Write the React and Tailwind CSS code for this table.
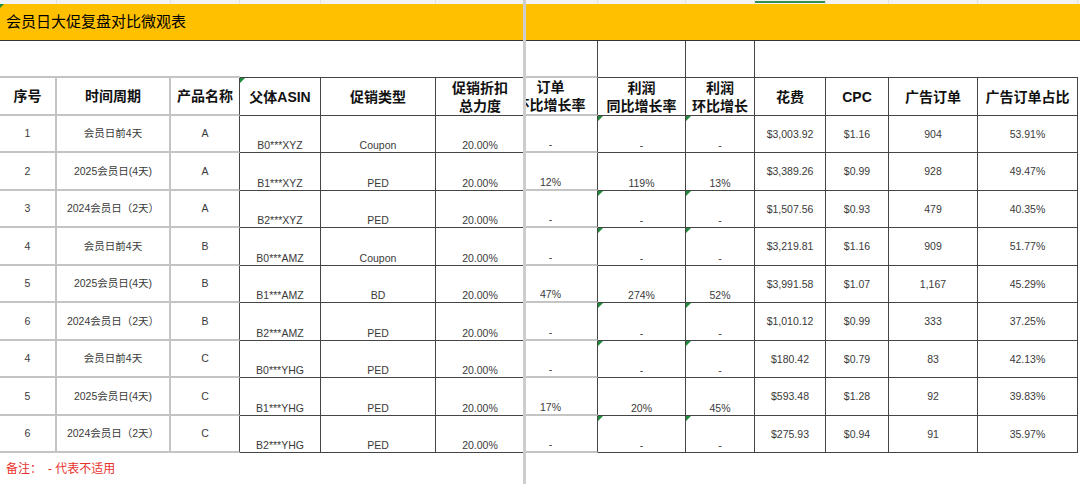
import React from "react";

const GRID =
  "grid grid-cols-[57px_114px_69px_81px_115px_88px_74px_88px_69px_71px_63px_89px_100px]";

const GRAY_R = "border-r-2 border-r-[#c4c4c4]";
const DARK_R = "border-r border-r-[#454545]";
const GRAY_B = "border-b-2 border-b-[#c4c4c4]";
const DARK_B = "border-b border-b-[#454545]";

const rightBorder = [GRAY_R, GRAY_R, DARK_R, DARK_R, DARK_R, "", DARK_R, DARK_R, DARK_R, DARK_R, DARK_R, DARK_R, DARK_R];
const bottomBorder = [GRAY_B, GRAY_B, GRAY_B, DARK_B, DARK_B, DARK_B, GRAY_B, DARK_B, DARK_B, DARK_B, DARK_B, DARK_B, DARK_B];
const align = [
  "items-center",
  "items-center",
  "items-center",
  "items-end",
  "items-end",
  "items-end",
  "items-end",
  "items-end",
  "items-end",
  "items-center",
  "items-center",
  "items-center",
  "items-center",
];

const headers = [
  ["序号"],
  ["时间周期"],
  ["产品名称"],
  ["父体ASIN"],
  ["促销类型"],
  ["促销折扣", "总力度"],
  ["订单", "环比增长率"],
  ["利润", "同比增长率"],
  ["利润", "环比增长"],
  ["花费"],
  ["CPC"],
  ["广告订单"],
  ["广告订单占比"],
];

const rows = [
  ["1", "会员日前4天", "A", "B0***XYZ", "Coupon", "20.00%", "-", "-", "-", "$3,003.92", "$1.16", "904", "53.91%"],
  ["2", "2025会员日(4天)", "A", "B1***XYZ", "PED", "20.00%", "12%", "119%", "13%", "$3,389.26", "$0.99", "928", "49.47%"],
  ["3", "2024会员日（2天）", "A", "B2***XYZ", "PED", "20.00%", "-", "-", "-", "$1,507.56", "$0.93", "479", "40.35%"],
  ["4", "会员日前4天", "B", "B0***AMZ", "Coupon", "20.00%", "-", "-", "-", "$3,219.81", "$1.16", "909", "51.77%"],
  ["5", "2025会员日(4天)", "B", "B1***AMZ", "BD", "20.00%", "47%", "274%", "52%", "$3,991.58", "$1.07", "1,167", "45.29%"],
  ["6", "2024会员日（2天）", "B", "B2***AMZ", "PED", "20.00%", "-", "-", "-", "$1,010.12", "$0.99", "333", "37.25%"],
  ["4", "会员日前4天", "C", "B0***YHG", "PED", "20.00%", "-", "-", "-", "$180.42", "$0.79", "83", "42.13%"],
  ["5", "2025会员日(4天)", "C", "B1***YHG", "PED", "20.00%", "17%", "20%", "45%", "$593.48", "$1.28", "92", "39.83%"],
  ["6", "2024会员日（2天）", "C", "B2***YHG", "PED", "20.00%", "-", "-", "-", "$275.93", "$0.94", "91", "35.97%"],
];

// little green "number stored as text" flag in a cell corner
const Flag = () => (
  <span className="absolute left-0 top-0 h-0 w-0 border-r-[5px] border-t-[5px] border-r-transparent border-t-[#1f8a3b]" />
);

// the 订单 column is partly scrolled under the frozen pane
const Shifted = ({ children }) => (
  <div className="-ml-[20px] w-[96px] shrink-0 text-center">{children}</div>
);

const HeaderRow = () => (
  <div className={`${GRID} h-[38px]`}>
    {headers.map((lines, i) => (
      <div
        key={i}
        className={`relative flex items-center justify-center overflow-hidden ${rightBorder[i]} ${bottomBorder[i]}`}
      >
        {i === 3 && <Flag />}
        {i === 6 ? (
          <Shifted>
            {lines.map((l) => (
              <div key={l} className="whitespace-nowrap">{l}</div>
            ))}
          </Shifted>
        ) : (
          <div className="text-center">
            {lines.map((l) => (
              <div key={l} className="whitespace-nowrap">{l}</div>
            ))}
          </div>
        )}
      </div>
    ))}
  </div>
);

const DataRow = ({ row, index }) => {
  const flagged = row[6] === "-";
  return (
    <div className={`${GRID} ${index % 2 ? "h-[38px]" : "h-[37px]"}`}>
      {row.map((val, i) => (
        <div
          key={i}
          className={`relative flex justify-center overflow-hidden ${align[i]} ${rightBorder[i]} ${bottomBorder[i]}`}
        >
          {flagged && (i === 7 || i === 8) && <Flag />}
          {i === 6 ? (
            <Shifted>{val}</Shifted>
          ) : (
            <span className="whitespace-nowrap">{val}</span>
          )}
        </div>
      ))}
    </div>
  );
};

export default function App() {
  return (
    <div
      className="relative h-[484px] w-[1080px] overflow-hidden bg-white text-[#111]"
      style={{ fontFamily: '"Liberation Sans", "Noto Sans CJK SC", sans-serif' }}
    >
      {/* strip of the row above */}
      <div className={`${GRID} h-[4px] bg-[#f3f3f3]`}>
        {headers.map((_, i) => (
          <div key={i} className="border-r border-r-[#e2e2e2]">
            {i === 9 && <div className="mt-[1px] h-[2px] bg-[#2f8f4e]" />}
          </div>
        ))}
      </div>

      {/* title */}
      <div className="relative flex h-[37px] items-center border-b border-b-[#333] bg-[#ffc000] pl-[6px] text-[15px] text-black">
        <span className="absolute left-0 top-0 h-0 w-0 border-r-[4px] border-t-[4px] border-r-transparent border-t-[#1f8a3b]" />
        会员日大促复盘对比微观表
      </div>

      {/* blank row */}
      <div className={`${GRID} h-[37px]`}>
        {headers.map((_, i) => (
          <div
            key={i}
            className={`${i >= 6 && i <= 8 ? DARK_R : ""} ${bottomBorder[i]}`}
          />
        ))}
      </div>

      <div className="text-[14px] font-bold leading-[18px]">
        <HeaderRow />
      </div>

      <div className="text-[10.5px] leading-[13px] text-[#3a3a3a]">
        {rows.map((row, i) => (
          <DataRow key={i} row={row} index={i} />
        ))}
      </div>

      {/* note */}
      <div className="flex h-[31px] items-center pl-[6px] text-[12px] text-[#e8322c]">
        <span>备注：</span>
        <span className="ml-[6px]">- 代表不适用</span>
      </div>

      {/* frozen pane divider */}
      <div className="absolute left-[523px] top-0 h-full w-[3px] bg-[#cdcdcd]" />
    </div>
  );
}
